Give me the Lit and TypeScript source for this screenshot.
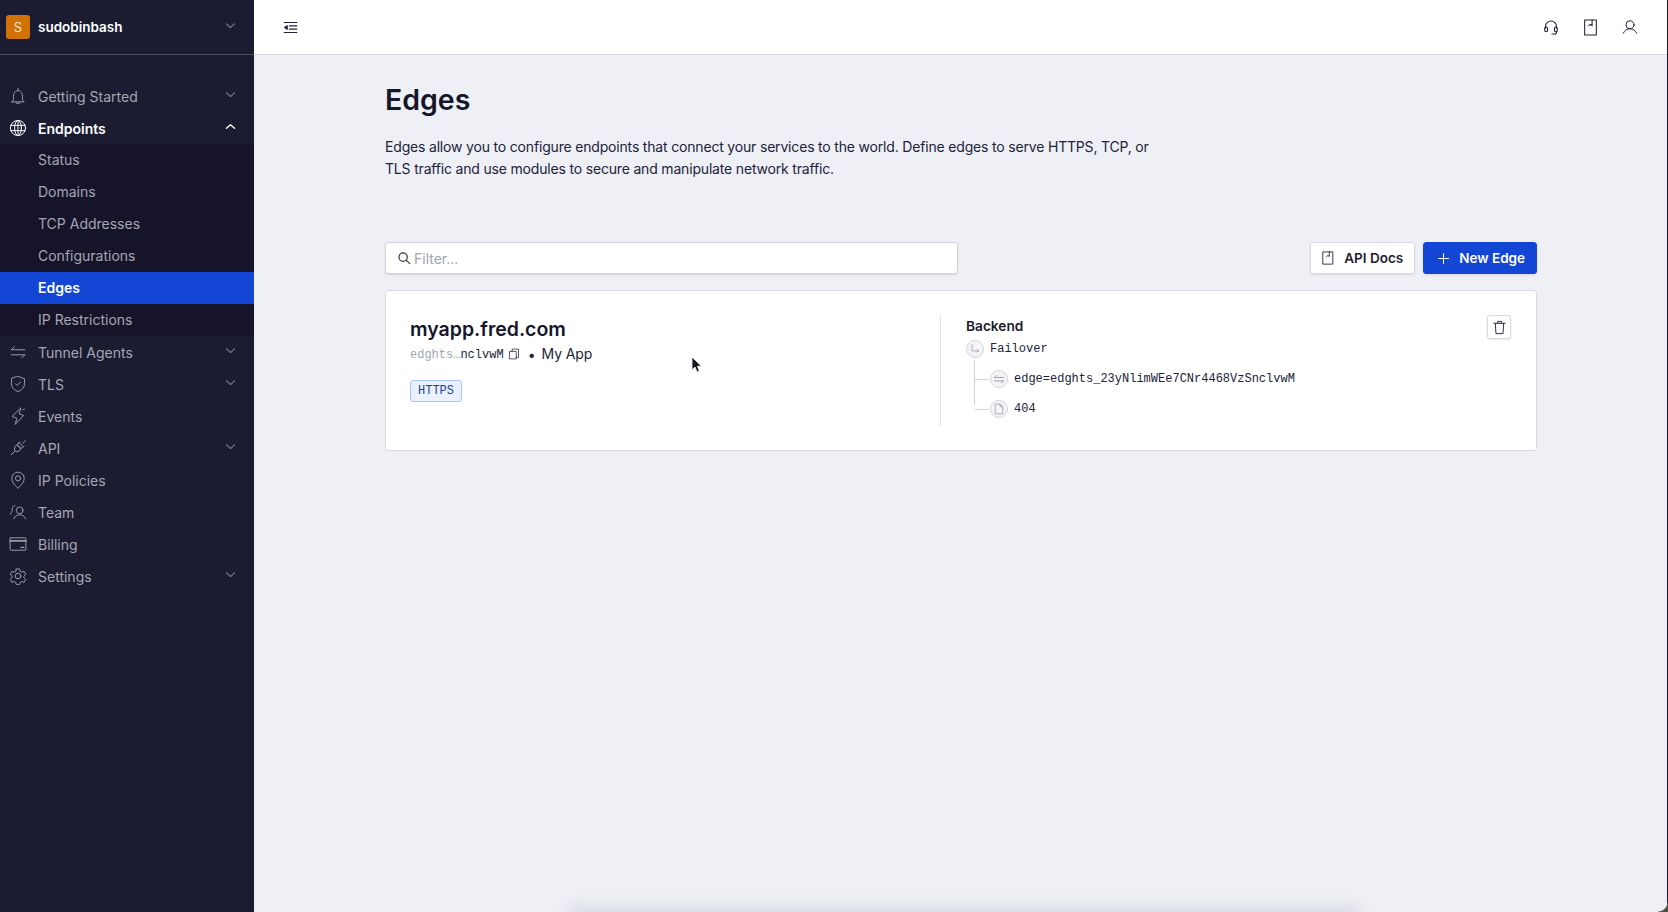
import { css, html, LitElement, svg, TemplateResult } from "lit";
import { customElement } from "lit/decorators.js";

const icon = (body: TemplateResult, size = 18, weight = 14) =>
  html`<svg
    width=${size}
    height=${size}
    viewBox="0 0 256 256"
    fill="none"
    stroke="currentColor"
    stroke-width=${weight}
    stroke-linecap="round"
    stroke-linejoin="round"
  >
    ${body}
  </svg>`;

const icons = {
  bell: svg`<path d="M64 184c0-40-4-64 8-92 8-24 28-40 56-40s48 16 56 40c12 28 8 52 8 92l24 28H40Z"/><path d="M100 212a28 28 0 0 0 56 0"/><path d="M128 52V20"/>`,
  globe: svg`<circle cx="128" cy="128" r="108"/><ellipse cx="128" cy="128" rx="48" ry="108"/><path d="M128 20v216M28 90h200M28 166h200"/>`,
  harpoons: svg`<path d="M32 96h192M32 96l44-44M224 168H32M224 168l-44 44"/>`,
  shield: svg`<path d="M128 20l92 32v72c0 64-52 96-92 112-40-16-92-48-92-112V52Z"/><path d="M92 124l24 24 48-48"/>`,
  bolt: svg`<path d="M168 16l-24 80 64 24-120 128 24-88-64-24Z"/><path d="M196 40l24-8"/>`,
  plug: svg`<path d="M112 88l56 56-28 28a40 40 0 0 1-56-56Z"/><path d="M148 56l52 52-28 28-52-52Z"/><path d="M84 172l-52 52M196 60l36-36M128 64l24-24M190 124l24-24"/>`,
  pin: svg`<circle cx="128" cy="104" r="36"/><path d="M128 240s-88-56-88-136a88 88 0 0 1 176 0c0 80-88 136-88 136Z"/>`,
  team: svg`<circle cx="152" cy="104" r="48"/><path d="M68 224c14-36 46-56 84-56s70 20 84 56"/><path d="M84 32a60 60 0 0 0-36 80c-8 12-20 28-28 48"/>`,
  card: svg`<rect x="16" y="40" width="224" height="176" rx="8"/><path d="M16 84h224" stroke-width="26"/><path d="M172 176h36" stroke-width="20"/>`,
  gear: svg`<circle cx="128" cy="128" r="40"/><path d="M104 28h48l8 34 22 12 32-12 24 42-26 24v24l26 24-24 42-32-12-22 12-8 34h-48l-8-34-22-12-32 12-24-42 26-24v-24L18 104l24-42 32 12 22-12Z"/>`,
  chevronDown: svg`<path d="M48 96l80 72 80-72"/>`,
  chevronUp: svg`<path d="M48 164l80-72 80 72"/>`,
  collapse: svg`<path d="M20 44h216M108 100h128M108 156h128M20 212h216"/><path d="M72 96l-44 32 44 32Z" fill="currentColor"/>`,
  headset: svg`<path d="M40 144v-24a88 88 0 0 1 176 0v24"/><rect x="28" y="128" width="44" height="72" rx="18"/><rect x="184" y="128" width="44" height="72" rx="18"/><path d="M216 200v8a32 32 0 0 1-32 32h-40"/>`,
  book: svg`<path d="M40 16h176v224H40Z"/><path d="M152 16v84l-26-18-26 18"/>`,
  user: svg`<circle cx="128" cy="92" r="64"/><path d="M20 228c20-44 60-72 108-72s88 28 108 72"/>`,
  search: svg`<circle cx="112" cy="112" r="76"/><path d="M168 168l64 64"/>`,
  plus: svg`<path d="M28 128h200M128 28v200"/>`,
  trash: svg`<path d="M32 56h192M96 56V24h64v32M56 56l12 176h120l12-176"/>`,
  copy: svg`<path d="M88 72V24h136v176h-48"/><path d="M40 72h136v160H40Z"/>`,
  corner: svg`<path d="M64 40v128h136M200 168l-28-24M200 168l-28 24"/>`,
  file: svg`<path d="M56 24h96l56 56v152H56Z"/><path d="M152 24v56h56"/>`,
};

interface NavItem {
  label: string;
  icon: TemplateResult;
  chevron?: boolean;
}

const topItems: NavItem[] = [
  { label: "Getting Started", icon: icons.bell, chevron: true },
];

const subItems = ["Status", "Domains", "TCP Addresses", "Configurations", "Edges", "IP Restrictions"];

const restItems: NavItem[] = [
  { label: "Tunnel Agents", icon: icons.harpoons, chevron: true },
  { label: "TLS", icon: icons.shield, chevron: true },
  { label: "Events", icon: icons.bolt },
  { label: "API", icon: icons.plug, chevron: true },
  { label: "IP Policies", icon: icons.pin },
  { label: "Team", icon: icons.team },
  { label: "Billing", icon: icons.card },
  { label: "Settings", icon: icons.gear, chevron: true },
];

@customElement("app-root")
class AppRoot extends LitElement {
  private navRow(item: NavItem) {
    return html`<div class="nav-row">
      <span class="nav-icon">${icon(item.icon)}</span>
      <span class="nav-label">${item.label}</span>
      ${item.chevron
        ? html`<span class="chevron">${icon(icons.chevronDown, 13, 22)}</span>`
        : ""}
    </div>`;
  }

  protected render() {
    return html`
      <aside class="sidebar">
        <div class="account">
          <span class="avatar">S</span>
          <span class="account-name">sudobinbash</span>
          <span class="chevron">${icon(icons.chevronDown, 13, 22)}</span>
        </div>
        <nav class="nav">
          ${topItems.map((item) => this.navRow(item))}
          <div class="nav-row open">
            <span class="nav-icon">${icon(icons.globe)}</span>
            <span class="nav-label">Endpoints</span>
            <span class="chevron">${icon(icons.chevronUp, 13, 26)}</span>
          </div>
          <div class="submenu">
            ${subItems.map(
              (label) =>
                html`<div class="sub-row ${label === "Edges" ? "active" : ""}">${label}</div>`
            )}
          </div>
          ${restItems.map((item) => this.navRow(item))}
        </nav>
      </aside>
      <div class="main">
        <header class="topbar">
          <span class="collapse">${icon(icons.collapse, 15, 18)}</span>
          <div class="top-actions">
            ${icon(icons.headset, 16, 18)} ${icon(icons.book, 17, 16)}
            ${icon(icons.user, 16, 16)}
          </div>
        </header>
        <main class="content">
          <h1>Edges</h1>
          <p class="intro">
            Edges allow you to configure endpoints that connect your services to the world. Define
            edges to serve HTTPS, TCP, or TLS traffic and use modules to secure and manipulate
            network traffic.
          </p>
          <div class="toolbar">
            <label class="filter">
              ${icon(icons.search, 14, 22)}
              <span>Filter...</span>
            </label>
            <div class="buttons">
              <button class="btn docs">${icon(icons.book, 14, 16)} API Docs</button>
              <button class="btn primary">${icon(icons.plus, 13, 20)} New Edge</button>
            </div>
          </div>
          <section class="card">
            <div class="card-left">
              <h2>myapp.fred.com</h2>
              <div class="meta">
                <span class="mono"><span class="dim">edghts…</span>nclvwM</span>
                ${icon(icons.copy, 12, 16)}
                <span class="dot">•</span>
                <span class="app-name">My App</span>
              </div>
              <span class="badge">HTTPS</span>
            </div>
            <div class="card-right">
              <div class="backend-title">Backend</div>
              <div class="tree-row">
                <span class="circle">${icon(icons.corner, 12, 14)}</span>
                <span class="mono">Failover</span>
              </div>
              <div class="tree-children">
                <div class="tree-row child">
                  <span class="circle">${icon(icons.harpoons, 12, 16)}</span>
                  <span class="mono">edge=edghts_23yNlimWEe7CNr4468VzSnclvwM</span>
                </div>
                <div class="tree-row child">
                  <span class="circle">${icon(icons.file, 12, 14)}</span>
                  <span class="mono">404</span>
                </div>
              </div>
            </div>
            <button class="trash">${icon(icons.trash, 15, 16)}</button>
          </section>
        </main>
        <svg class="cursor" width="12" height="18" viewBox="0 0 12 18">
          <path
            d="M1 1v13l3-3 2 5 2.4-1-2-4.8H10.500Z"
            fill="#15151c"
            stroke="#fff"
            stroke-width="0.8"
          />
        </svg>
        <div class="bottom-shadow"></div>
        <div class="window-edge"></div>
        <div class="window-corner"></div>
      </div>
    `;
  }

  static styles = css`
    :host {
      display: flex;
      height: 912px;
      overflow: hidden;
      font-family: "Inter", "Noto Sans", sans-serif;
      font-size: 14px;
      color: #1a1b2b;
      background: #eff0f5;
      position: relative;
    }

    .sidebar {
      flex: 0 0 254px;
      background: #1b1b31;
      color: #a6a7b3;
    }

    .account {
      display: flex;
      align-items: center;
      height: 55px;
      box-sizing: border-box;
      padding: 0 17px 1px 6px;
      border-bottom: 1px solid #4a4b5c;
    }

    .avatar {
      width: 24px;
      height: 24px;
      border-radius: 3px;
      background: #d17206;
      color: #f3e3cf;
      font-size: 13px;
      display: flex;
      align-items: center;
      justify-content: center;
      margin-right: 8px;
    }

    .account-name {
      flex: 1;
      color: #fff;
      font-weight: 600;
      font-size: 13.5px;
    }

    .chevron {
      display: flex;
      color: #7b7c8b;
      margin-top: -3px;
    }

    .nav {
      padding-top: 25px;
    }

    .nav-row {
      display: flex;
      align-items: center;
      height: 32px;
      padding: 0 17px 0 9px;
    }

    .nav-icon {
      display: flex;
      width: 29px;
      color: #9a9ba8;
    }

    .nav-label {
      flex: 1;
    }

    .nav-row.open .nav-label,
    .nav-row.open .nav-icon,
    .nav-row.open .chevron {
      color: #fff;
      font-weight: 600;
    }

    .submenu {
      background: #15142a;
    }

    .sub-row {
      height: 32px;
      line-height: 32px;
      padding-left: 38px;
    }

    .sub-row.active {
      background: #1446d6;
      color: #fff;
      font-weight: 600;
    }

    .main {
      flex: 1;
      min-width: 0;
      position: relative;
    }

    .topbar {
      display: flex;
      align-items: center;
      justify-content: space-between;
      height: 55px;
      box-sizing: border-box;
      background: #fff;
      border-bottom: 1px solid #d8d9e1;
      padding: 0 30px 0 29px;
      color: #23243a;
    }

    .collapse {
      display: flex;
    }

    .top-actions {
      display: flex;
      align-items: center;
      gap: 23px;
    }

    .content {
      padding: 0 131px 0 131px;
    }

    h1 {
      margin: 0;
      padding-top: 25px;
      font-size: 28.5px;
      line-height: 40px;
      font-weight: 600;
      color: #15162a;
    }

    .intro {
      margin: 16px 0 0;
      width: 775px;
      font-size: 14px;
      letter-spacing: -0.18px;
      line-height: 22px;
      color: #22233a;
    }

    .toolbar {
      display: flex;
      justify-content: space-between;
      margin-top: 62px;
    }

    .filter {
      display: flex;
      align-items: center;
      gap: 3px;
      box-sizing: border-box;
      width: 573px;
      height: 32px;
      padding-left: 11px;
      background: #fff;
      border: 1px solid #d4d5dc;
      border-radius: 3px;
      box-shadow: 0 1px 2px rgba(30, 30, 60, 0.12);
      color: #a3a4ae;
    }

    .filter svg {
      color: #34354a;
    }

    .buttons {
      display: flex;
      gap: 8px;
    }

    button {
      font: inherit;
      cursor: pointer;
    }

    .btn {
      display: flex;
      align-items: center;
      gap: 9px;
      height: 32px;
      padding: 0 11px 0 13px;
      background: #fff;
      border: 1px solid #d9dae1;
      border-radius: 3px;
      color: #1f2033;
      font-size: 13.5px;
      font-weight: 600;
      box-shadow: 0 1px 2px rgba(30, 30, 60, 0.1);
    }

    .btn.docs {
      padding-left: 10px;
    }

    .btn.primary {
      background: #1446d6;
      border-color: #1446d6;
      color: #fff;
    }

    .card {
      display: flex;
      position: relative;
      box-sizing: border-box;
      height: 161px;
      margin-top: 16px;
      padding: 24px 24px;
      background: #fff;
      border: 1px solid #d8d9e1;
      border-radius: 3px;
    }

    .card-left {
      width: 530px;
      border-right: 1px solid #e4e5ea;
      height: 111px;
    }

    h2 {
      margin: 0;
      padding-top: 1px;
      font-size: 19.5px;
      line-height: 26px;
      font-weight: 600;
      color: #15162a;
    }

    .meta {
      display: flex;
      align-items: center;
      gap: 4px;
      height: 22px;
      margin-top: 1px;
      color: #22233a;
    }

    .mono {
      font-family: "Liberation Mono", monospace;
      font-size: 12px;
      color: #22233a;
    }

    .meta .mono {
      padding-top: 2px;
    }

    .dim {
      color: #a3a4ae;
    }

    .dot {
      margin: 0 2px 0 4px;
    }

    .app-name {
      letter-spacing: -0.1px;
      padding-bottom: 2px;
    }

    .badge {
      display: inline-block;
      margin-top: 15px;
      padding: 0 7px;
      height: 22px;
      line-height: 20px;
      box-sizing: border-box;
      font-family: "Liberation Mono", monospace;
      font-size: 12px;
      color: #1c3f9e;
      background: #eaf1fd;
      border: 1px solid #a9c6f0;
      border-radius: 3px;
    }

    .card-right {
      padding-left: 25px;
      flex: 1;
    }

    .backend-title {
      font-weight: 600;
      font-size: 13.7px;
      line-height: 20px;
      margin-top: 1px;
    }

    .tree-row {
      display: flex;
      align-items: center;
      gap: 6px;
      height: 22px;
      margin-top: 2px;
    }

    .circle {
      display: flex;
      align-items: center;
      justify-content: center;
      width: 18px;
      height: 18px;
      flex: none;
      border-radius: 50%;
      background: #f3f4f7;
      border: 1px solid #d4d5dc;
      box-sizing: border-box;
      color: #8a8b98;
    }

    .tree-children {
      margin-left: 8px;
      padding-top: 4px;
      border-left: 1px solid #d4d5dc;
      height: 41px;
    }

    .tree-row.child {
      height: 30px;
      margin: 0;
      padding-left: 15px;
      position: relative;
    }

    .tree-row.child::before {
      content: "";
      position: absolute;
      left: 0;
      top: 15px;
      width: 14px;
      border-top: 1px solid #d4d5dc;
    }

    .trash {
      position: absolute;
      top: 24px;
      right: 25px;
      display: flex;
      align-items: center;
      justify-content: center;
      width: 24px;
      height: 24px;
      padding: 0;
      background: #fff;
      border: 1px solid #d9dae1;
      border-radius: 3px;
      color: #23243a;
      box-shadow: 0 1px 2px rgba(30, 30, 60, 0.1);
    }

    .cursor {
      position: absolute;
      left: 437px;
      top: 356px;
    }

    .bottom-shadow {
      position: absolute;
      left: 320px;
      width: 780px;
      bottom: -12px;
      height: 12px;
      box-shadow: 0 0 16px 6px rgba(170, 172, 195, 0.3);
    }

    .window-edge {
      position: absolute;
      top: 0;
      bottom: 0;
      right: 0;
      width: 1px;
      background: #1c1c24;
    }

    .window-corner {
      position: absolute;
      right: 0;
      bottom: 0;
      width: 10px;
      height: 10px;
      background: radial-gradient(circle at 0 0, transparent 9px, #4f4e48 10px);
    }
  `;
}
